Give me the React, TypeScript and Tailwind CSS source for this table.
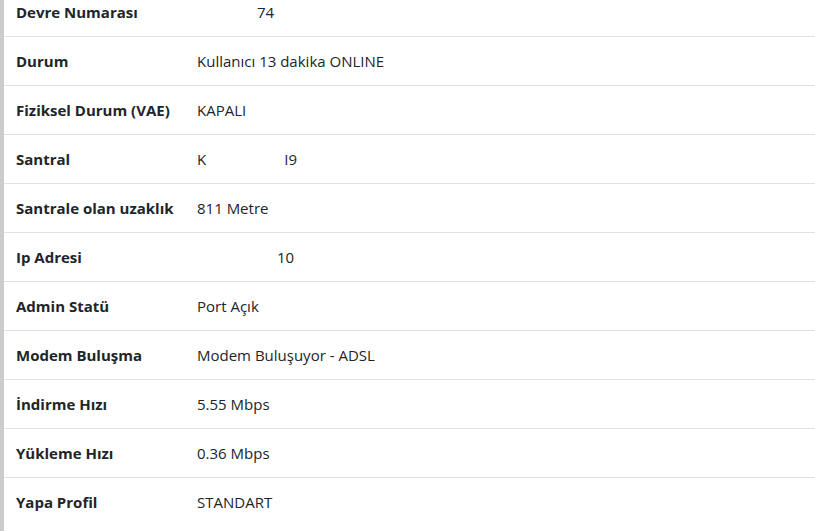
import React from "react";

type Row = { label: string; value: React.ReactNode };

const rows: Row[] = [
  { label: "Devre Numarası", value: <span className="pl-[60px]">74</span> },
  { label: "Durum", value: "Kullanıcı 13 dakika ONLINE" },
  { label: "Fiziksel Durum (VAE)", value: "KAPALI" },
  {
    label: "Santral",
    value: (
      <span>
        K<span className="inline-block w-[78px]" />I9
      </span>
    ),
  },
  { label: "Santrale olan uzaklık", value: "811 Metre" },
  { label: "Ip Adresi", value: <span className="pl-[80px]">10</span> },
  { label: "Admin Statü", value: "Port Açık" },
  { label: "Modem Buluşma", value: "Modem Buluşuyor - ADSL" },
  { label: "İndirme Hızı", value: "5.55 Mbps" },
  { label: "Yükleme Hızı", value: "0.36 Mbps" },
  { label: "Yapa Profil", value: "STANDART" },
];

export default function App() {
  return (
    <div
      className="h-[531px] w-[815px] overflow-hidden bg-white text-[#212529] border-l-4 border-[#cccccc]"
      style={{ fontFamily: '"Open Sans", "Noto Sans", sans-serif' }}
    >
      <div className="-mt-[12px]">
        {rows.map((r, i) => (
          <div
            key={i}
            className={`grid grid-cols-[181px_1fr] h-[49px] items-center text-[15px] ${
              i < rows.length - 1 ? "border-b border-[#dee2e6]" : ""
            }`}
          >
            <div className="px-3 font-bold whitespace-nowrap">{r.label}</div>
            <div className="px-3 whitespace-nowrap">{r.value}</div>
          </div>
        ))}
      </div>
    </div>
  );
}
